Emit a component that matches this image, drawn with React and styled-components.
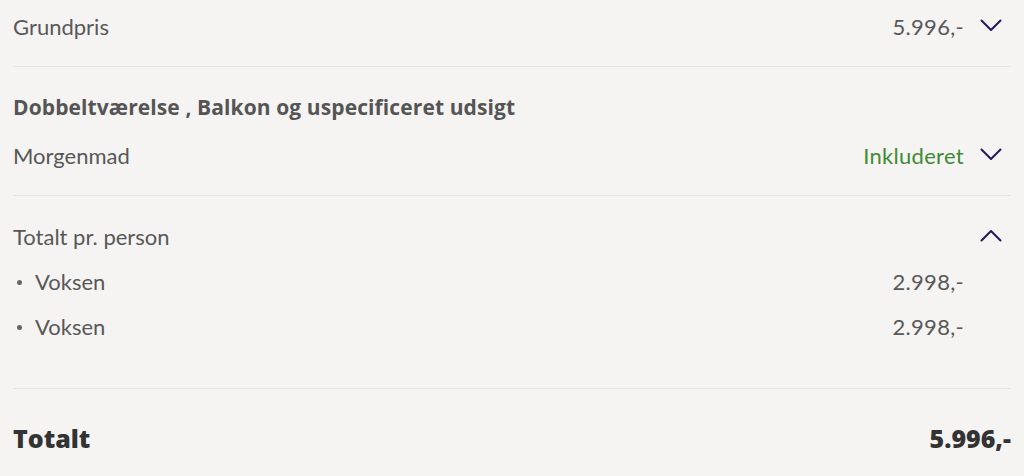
import React from "react";
import styled, { createGlobalStyle } from "styled-components";

const Global = createGlobalStyle`
  html, body { margin: 0; padding: 0; background: #f5f4f2; }
  body { font-family: "Lato", "Open Sans", sans-serif; color: #555; }
`;

const Wrap = styled.div`
  margin: 0 13px;
`;

const Section = styled.section`
  display: flex;
  flex-direction: column;
  gap: ${(p) => p.$gap || 0}px;
  padding: ${(p) => p.$pt}px 0 ${(p) => p.$pb}px;
  border-bottom: ${(p) => (p.$last ? "none" : "1px solid #e6e4e1")};
`;

const Row = styled.div`
  display: flex;
  align-items: center;
  justify-content: space-between;
  height: 30px;
  font-size: 22px;
`;

const Label = styled.span`
  display: flex;
  align-items: center;
  color: #585858;
`;

const Bullet = styled.span`
  width: 5px;
  height: 5px;
  border-radius: 50%;
  background: #666;
  margin: 2px 13px 0 4px;
`;

const Right = styled.div`
  display: flex;
  align-items: center;
`;

const Value = styled.span`
  color: ${(p) => (p.$green ? "#3f8a35" : "#585858")};
  letter-spacing: 0.3px;
`;

const IconSlot = styled.span`
  width: 47px;
  display: flex;
  justify-content: flex-end;
  padding-right: 9px;
  padding-bottom: 1px;
  box-sizing: border-box;
`;

const Heading = styled.div`
  font-family: "Open Sans", "Lato", sans-serif;
  font-size: 21px;
  font-weight: 700;
  letter-spacing: 0.1px;
  line-height: 26px;
  color: #555;
`;

const TotalRow = styled(Row)`
  font-family: "Open Sans", "Lato", sans-serif;
  font-size: 25px;
  font-weight: 800;
  color: #333;
`;

const Chevron = ({ up }) => (
  <svg width="22" height="13" viewBox="0 0 22 13" fill="none">
    <path
      d={up ? "M1.5 11.5L11 2l9.5 9.5" : "M1.5 1.5L11 11l9.5-9.5"}
      stroke="#1f1b5e"
      strokeWidth="2"
      strokeLinecap="round"
      strokeLinejoin="round"
    />
  </svg>
);

export default function App() {
  return (
    <>
      <Global />
      <Wrap>
        <Section $pt={11} $pb={25}>
          <Row>
            <Label>Grundpris</Label>
            <Right>
              <Value>5.996,-</Value>
              <IconSlot><Chevron /></IconSlot>
            </Right>
          </Row>
        </Section>
        <Section $pt={27} $pb={25} $gap={20}>
          <Heading>Dobbeltværelse , Balkon og uspecificeret udsigt</Heading>
          <Row>
            <Label>Morgenmad</Label>
            <Right>
              <Value $green>Inkluderet</Value>
              <IconSlot><Chevron /></IconSlot>
            </Right>
          </Row>
        </Section>
        <Section $pt={25} $pb={47} $gap={15}>
          <Row>
            <Label>Totalt pr. person</Label>
            <Right>
              <IconSlot><Chevron up /></IconSlot>
            </Right>
          </Row>
          <Row>
            <Label><Bullet />Voksen</Label>
            <Right>
              <Value>2.998,-</Value>
              <IconSlot />
            </Right>
          </Row>
          <Row>
            <Label><Bullet />Voksen</Label>
            <Right>
              <Value>2.998,-</Value>
              <IconSlot />
            </Right>
          </Row>
        </Section>
        <Section $pt={34} $pb={20} $last>
          <TotalRow>
            <span>Totalt</span>
            <span>5.996,-</span>
          </TotalRow>
        </Section>
      </Wrap>
    </>
  );
}
